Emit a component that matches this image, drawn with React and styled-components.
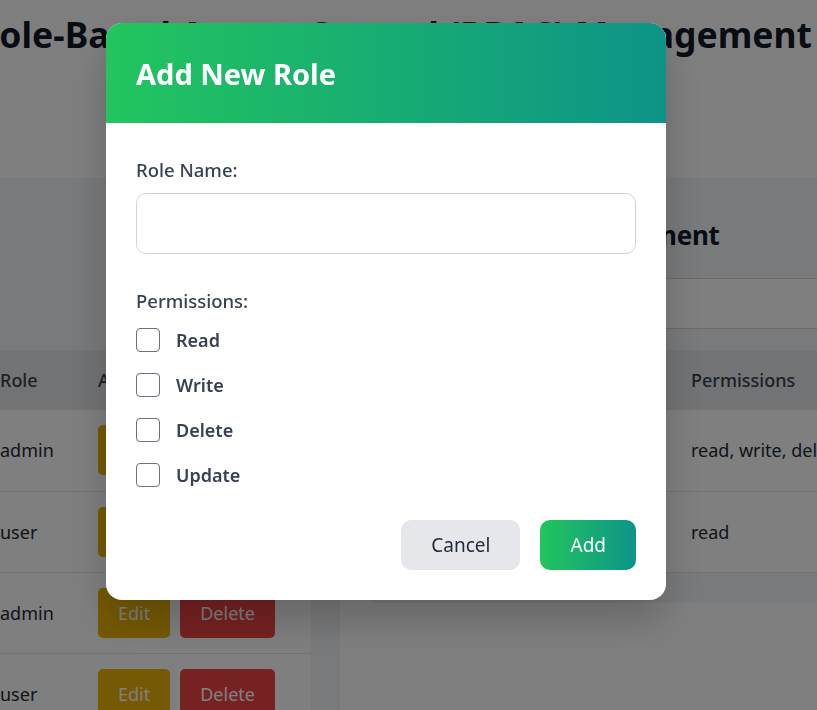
import React from "react";
import styled, { createGlobalStyle } from "styled-components";

const Global = createGlobalStyle`
  html, body { margin: 0; padding: 0; background: #ffffff; }
  body { font-family: "Noto Sans", "Open Sans", sans-serif; color: #1f2937; overflow: hidden; }
  * { box-sizing: border-box; }
`;

const Page = styled.div`
  width: 817px;
  height: 710px;
  display: flex;
  flex-direction: column;
  align-items: center;
  overflow: hidden;
`;

const Title = styled.h1`
  margin: 10px 0 0;
  padding-right: 29px;
  font-size: 35.5px;
  line-height: 48px;
  font-weight: 700;
  color: #111827;
  white-space: nowrap;
  flex-shrink: 0;
`;

const Columns = styled.div`
  flex-shrink: 0;
  margin-top: 120px;
  display: flex;
  align-items: flex-start;
  gap: 31px;
`;

const Card = styled.section`
  flex-shrink: 0;
  width: ${(p) => p.$w}px;
  background: #f3f4f6;
  padding: 39px 29px 30px 29px;
  padding-left: ${(p) => p.$pl}px;
`;

const CardTitle = styled.h2`
  margin: 0;
  font-size: 26px;
  line-height: 36px;
  letter-spacing: -0.3px;
  font-weight: 700;
  color: #111827;
  white-space: nowrap;
`;

const SearchBar = styled.div`
  margin-top: 25px;
  height: 51px;
  background: #ffffff;
  border-top: 1px solid #d1d5db;
  border-bottom: 1px solid #d1d5db;
`;

const Table = styled.table`
  margin-top: ${(p) => p.$mt}px;
  width: 100%;
  table-layout: fixed;
  border-collapse: collapse;
  background: #ffffff;
  font-size: 18px;
`;

const Th = styled.th`
  height: 60px;
  padding: 0 16px;
  background: #e5e7eb;
  color: #374151;
  font-weight: 500;
  text-align: left;
  white-space: nowrap;
`;

const Td = styled.td`
  height: 81px;
  padding: 0 16px;
  border-bottom: 1px solid #e5e7eb;
  color: #1f2937;
  white-space: nowrap;
  overflow: hidden;
`;

const RowButton = styled.button`
  height: 50px;
  padding: 0 20px;
  margin-right: 10px;
  border: none;
  border-radius: 5px;
  background: ${(p) => (p.$kind === "edit" ? "#eab308" : "#ef4444")};
  color: #ffffff;
  font-family: inherit;
  font-size: 18px;
`;

const Overlay = styled.div`
  position: fixed;
  inset: 0;
  background: rgba(0, 0, 0, 0.5);
  display: flex;
  align-items: flex-start;
  justify-content: flex-start;
`;

const Modal = styled.div`
  margin: 23px 0 0 106px;
  width: 560px;
  background: #ffffff;
  border-radius: 16px;
  overflow: hidden;
  box-shadow: 0 20px 40px rgba(0, 0, 0, 0.2);
`;

const ModalHeader = styled.div`
  height: 100px;
  padding: 0 30px;
  display: flex;
  align-items: center;
  background: linear-gradient(to right, #22c55e, #0d9488);
`;

const ModalTitle = styled.h2`
  margin: 0;
  font-size: 29px;
  font-weight: 700;
  color: #ffffff;
`;

const ModalBody = styled.div`
  padding: 35px 30px 30px;
  display: flex;
  flex-direction: column;
`;

const Label = styled.label`
  display: block;
  font-size: 18.5px;
  line-height: 24px;
  font-weight: 500;
  color: #374151;
`;

const TextInput = styled.input`
  margin-top: 11px;
  width: 100%;
  height: 61px;
  border: 1px solid #d1d5db;
  border-radius: 10px;
  padding: 0 16px;
  font-family: inherit;
  font-size: 18px;
  outline: none;
`;

const Group = styled.div`
  margin-top: 35px;
  display: flex;
  flex-direction: column;
  gap: 15px;
`;

const CheckList = styled.div`
  display: flex;
  flex-direction: column;
  gap: 15px;
  margin-top: -3px;
`;

const CheckRow = styled.label`
  display: flex;
  align-items: center;
  gap: 16px;
  height: 30px;
  font-size: 18px;
  font-weight: 600;
  color: #374151;
`;

const Box = styled.input`
  appearance: none;
  margin: 0;
  width: 24px;
  height: 24px;
  border: 1.5px solid #6b7280;
  border-radius: 4px;
  background: #ffffff;
`;

const Actions = styled.div`
  margin-top: 30px;
  display: flex;
  justify-content: flex-end;
  gap: 20px;
`;

const Button = styled.button`
  height: 50px;
  padding: 0 30px;
  border: none;
  border-radius: 10px;
  font-family: inherit;
  font-size: 19px;
  background: ${(p) => (p.$primary ? "linear-gradient(to right, #22c55e, #0d9488)" : "#e5e7eb")};
  color: ${(p) => (p.$primary ? "#ffffff" : "#1f2937")};
`;

const users = [
  { name: "alice", role: "admin" },
  { name: "bob", role: "user" },
  { name: "carol", role: "admin" },
  { name: "dave", role: "user" },
];

const roles = [
  { name: "admin", perms: "read, write, delete, update" },
  { name: "user", perms: "read" },
];

export default function App() {
  return (
    <>
      <Global />
      <Page>
        <Title>Role-Based Access Control (RBAC) Management</Title>
        <Columns>
          <Card $w={560} $pl={29}>
            <CardTitle>Users</CardTitle>
            <Table $mt={97}>
              <colgroup>
                <col style={{ width: 175 }} />
                <col style={{ width: 98 }} />
                <col />
              </colgroup>
              <thead>
                <tr>
                  <Th>Username</Th>
                  <Th>Role</Th>
                  <Th>Actions</Th>
                </tr>
              </thead>
              <tbody>
                {users.map((u) => (
                  <tr key={u.name}>
                    <Td>{u.name}</Td>
                    <Td>{u.role}</Td>
                    <Td>
                      <RowButton $kind="edit">Edit</RowButton>
                      <RowButton $kind="delete">Delete</RowButton>
                    </Td>
                  </tr>
                ))}
              </tbody>
            </Table>
          </Card>
          <Card $w={666} $pl={31}>
            <CardTitle>Permission Management</CardTitle>
            <SearchBar />
            <Table $mt={21}>
              <colgroup>
                <col style={{ width: 273 }} />
                <col style={{ width: 250 }} />
                <col />
              </colgroup>
              <thead>
                <tr>
                  <Th>Role Name</Th>
                  <Th>Permissions</Th>
                  <Th>Actions</Th>
                </tr>
              </thead>
              <tbody>
                {roles.map((r) => (
                  <tr key={r.name}>
                    <Td>{r.name}</Td>
                    <Td>{r.perms}</Td>
                    <Td>
                      <RowButton $kind="edit">Edit</RowButton>
                    </Td>
                  </tr>
                ))}
              </tbody>
            </Table>
          </Card>
        </Columns>
      </Page>
      <Overlay>
        <Modal>
          <ModalHeader>
            <ModalTitle>Add New Role</ModalTitle>
          </ModalHeader>
          <ModalBody>
            <Label htmlFor="roleName">Role Name:</Label>
            <TextInput id="roleName" type="text" />
            <Group>
              <Label as="div">Permissions:</Label>
              <CheckList>
                {["Read", "Write", "Delete", "Update"].map((p) => (
                  <CheckRow key={p}>
                    <Box type="checkbox" />
                    {p}
                  </CheckRow>
                ))}
              </CheckList>
            </Group>
            <Actions>
              <Button>Cancel</Button>
              <Button $primary>Add</Button>
            </Actions>
          </ModalBody>
        </Modal>
      </Overlay>
    </>
  );
}
